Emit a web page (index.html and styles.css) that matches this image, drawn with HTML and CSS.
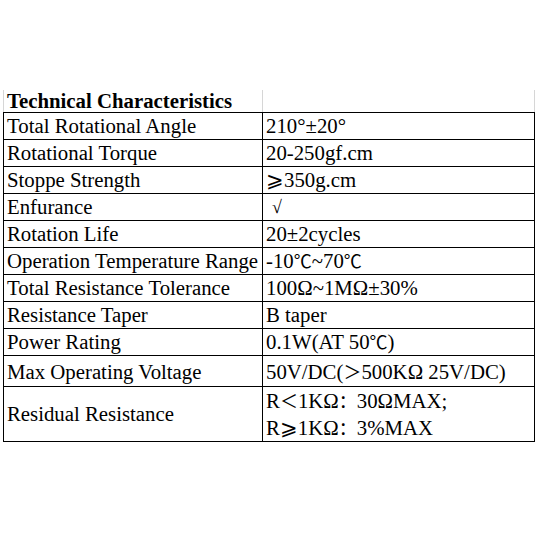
FILE: index.html
```html
<!DOCTYPE html>
<html>
<head>
<meta charset="utf-8">
<link rel="stylesheet" href="styles.css">
</head>
<body>
<table class="spec">
  <tr class="head"><td class="k">Technical Characteristics</td><td class="v"></td></tr>
  <tr class="row"><td class="k">Total Rotational Angle</td><td class="v">210°±20°</td></tr>
  <tr class="row"><td class="k">Rotational Torque</td><td class="v">20-250gf.cm</td></tr>
  <tr class="row"><td class="k">Stoppe Strength</td><td class="v">⩾350g.cm</td></tr>
  <tr class="row"><td class="k">Enfurance</td><td class="v"><span class="check">√</span></td></tr>
  <tr class="row"><td class="k">Rotation Life</td><td class="v">20±2cycles</td></tr>
  <tr class="row"><td class="k">Operation Temperature Range</td><td class="v">-10<span class="cj">℃</span>~70<span class="cj">℃</span></td></tr>
  <tr class="row"><td class="k">Total Resistance Tolerance</td><td class="v">100Ω~1MΩ±30%</td></tr>
  <tr class="row"><td class="k">Resistance Taper</td><td class="v">B taper</td></tr>
  <tr class="row"><td class="k">Power Rating</td><td class="v">0.1W(AT 50<span class="cj">℃</span>)</td></tr>
  <tr class="row tall"><td class="k">Max Operating Voltage</td><td class="v">50V/DC(<span class="cj">＞</span>500KΩ 25V/DC)</td></tr>
  <tr class="row double"><td class="k">Residual Resistance</td><td class="v"><div class="ln">R<span class="cj">＜</span>1KΩ<span class="cj">：</span>30ΩMAX;</div><div class="ln">R⩾1KΩ<span class="cj">：</span>3%MAX</div></td></tr>
</table>
</body>
</html>
```
FILE: styles.css
```css
html, body {
  margin: 0;
  padding: 0;
  background: #ffffff;
}
body {
  padding: 90px 0 0 3px;
  font-family: "Liberation Serif", "Noto Sans CJK SC", serif;
  color: #000000;
}
.spec {
  border-collapse: collapse;
  table-layout: fixed;
  width: 530px;
}
.spec td {
  padding: 0 0 0 3px;
  font-size: 20.8px;
  line-height: 22px;
  vertical-align: bottom;
  white-space: nowrap;
  overflow: hidden;
}
.spec td.k { width: 255px; }
.spec td.v { width: 268px; }
.head td {
  height: 21px;
  font-weight: bold;
  border-left: 1px solid #d6d6d6;
  border-right: 1px solid #d6d6d6;
  border-bottom: 1.5px solid #000;
  padding-bottom: 0;
}
.row td {
  height: 24px;
  border: 1.5px solid #000;
  padding-bottom: 2px;
}
.row.tall td { height: 27px; padding-bottom: 3px; }
.row.double td { height: 54px; vertical-align: middle; padding-bottom: 0; }
.ln { line-height: 27px; }
.cj {
  font-family: "Noto Sans CJK SC", sans-serif;
  font-size: 18px;
}
.check {
  display: inline-block;
  padding-left: 6px;
  font-size: 18px;
}
```
